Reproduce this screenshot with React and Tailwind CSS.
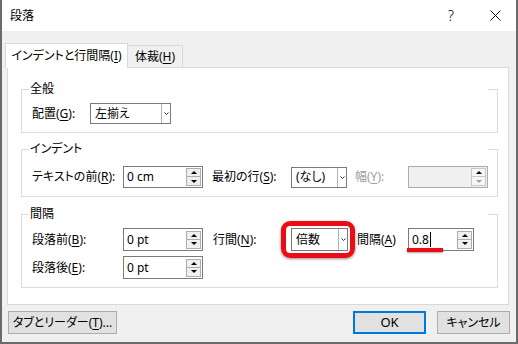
import React from 'react';

const font = "font-['Noto_Sans','Noto_Sans_CJK_JP',sans-serif] [font-feature-settings:'palt']";

function Mn({ pre, k, post, dim }) {
  return (
    <span className={`whitespace-nowrap ${dim ? 'text-[#a0a0a0]' : 'text-black'}`}>
      {pre}
      <span className="underline underline-offset-[2px]">{k}</span>
      {post}
    </span>
  );
}

function Up({ dim }) {
  return <div className={`h-0 w-0 border-x-[3px] border-b-[3px] border-x-transparent ${dim ? 'border-b-[#a0a0a0]' : 'border-b-black'}`} />;
}

function Down({ dim }) {
  return <div className={`h-0 w-0 border-x-[3px] border-t-[3px] border-x-transparent ${dim ? 'border-t-[#a0a0a0]' : 'border-t-black'}`} />;
}

function Spinner({ disabled }) {
  return (
    <div className="mr-[1px] flex w-[15px] flex-col">
      <div className={`flex h-[9px] items-center justify-center border ${disabled ? 'border-[#c8c8c8] bg-[#f7f7f7]' : 'border-[#adadad] bg-[#f0f0f0]'}`}>
        <Up />
      </div>
      <div className={`flex h-[9px] items-center justify-center border border-t-0 ${disabled ? 'border-[#c8c8c8] bg-[#f7f7f7]' : 'border-[#adadad] bg-[#f0f0f0]'}`}>
        <Down dim={disabled} />
      </div>
    </div>
  );
}

function SpinInput({ value, w = 'w-[80px]', h = 'h-[22px]', disabled, children }) {
  return (
    <div className={`relative flex ${w} ${h} items-center border ${disabled ? 'border-[#acacac] bg-[#f0f0f0]' : 'border-[#7a7a7a] bg-white'}`}>
      <span className="flex flex-1 items-center whitespace-pre pl-[3px] text-[12px] leading-[16px]">{value}</span>
      <Spinner disabled={disabled} />
      {children}
    </div>
  );
}

function Select({ value, w, h = 'h-[21px]', children }) {
  return (
    <div className={`relative flex ${w} ${h} border border-[#7a7a7a] bg-white`}>
      <span className="flex flex-1 items-center pl-[4px] text-[12px] leading-[16px]">{value}</span>
      <span className="flex w-[9px] items-center justify-center border-l border-[#b5b5b5]">
        <svg width="5" height="3" viewBox="0 0 5 3">
          <polyline points="0.5,0.5 2.5,2.5 4.5,0.5" fill="none" stroke="#333" strokeWidth="1" />
        </svg>
      </span>
      {children}
    </div>
  );
}

function Group({ title, className = '', bodyClass = '', children }) {
  return (
    <div className={`flex w-[477px] flex-col ${className}`}>
      <div className="flex h-[16px]">
        <div className="h-[8px] w-[8px] self-end border-l border-t border-[#dcdcdc]" />
        <span className="pl-[1px] text-[12px] leading-[16px]">{title}</span>
        <div className="flex-1" />
        <div className="h-[8px] w-[10px] self-end border-r border-t border-[#dcdcdc]" />
      </div>
      <div className={`border-x border-b border-[#dcdcdc] pl-[10px] ${bodyClass}`}>{children}</div>
    </div>
  );
}

export default function App() {
  return (
    <div className={`flex h-[344px] w-[518px] flex-col border-x-2 border-b-2 border-[#6b6b6b] bg-[#f0f0f0] text-black ${font}`}>
      {/* title bar */}
      <div className="flex h-[31px] items-center bg-white">
        <span className="pl-[8px] text-[12px]">段落</span>
        <div className="flex-1" />
        <span className="mr-[36px] text-[14px] font-light leading-none">?</span>
        <svg className="mr-[15px]" width="11" height="11" viewBox="0 0 11 11">
          <path d="M0.5 0.5 L10.5 10.5 M10.5 0.5 L0.5 10.5" stroke="#111" strokeWidth="1" />
        </svg>
      </div>

      <div className="flex flex-1 flex-col pl-[5px] pt-[12px]">
        {/* tabs */}
        <div className="flex items-end">
          <div className="relative z-10 -mb-px ml-[-2px] flex h-[25px] w-[123px] items-center justify-center border-x border-t border-[#d9d9d9] bg-white text-[12px]">
            <Mn pre="インデントと行間隔(" k="I" post=")" />
          </div>
          <div className="flex h-[22px] w-[55px] items-center justify-center border-r border-t border-[#d9d9d9] bg-[#f0f0f0] text-[12px]">
            <Mn pre="体裁(" k="H" post=")" />
          </div>
        </div>

        {/* panel */}
        <div className="flex w-[502px] flex-col border border-[#d9d9d9] bg-white pb-[16px] pl-[13px] pt-[13px]">
          <Group title="全般" bodyClass="pt-[6px] pb-[8px]">
            <div className="flex h-[21px] items-center text-[12px]">
              <span className="w-[58px]"><Mn pre="配置(" k="G" post="):" /></span>
              <Select value="左揃え" w="w-[81px]" />
            </div>
          </Group>

          <Group title="インデント" className="mt-[8px]" bodyClass="pt-[9px] pb-[8px]">
            <div className="flex h-[22px] items-center text-[12px]">
              <span className="w-[91px]"><Mn pre="テキストの前(" k="R" post="):" /></span>
              <SpinInput value="0 cm" />
              <span className="ml-[9px] w-[79px]"><Mn pre="最初の行(" k="S" post="):" /></span>
              <Select value="(なし)" w="w-[56px]" />
              <span className="ml-[8px] w-[53px]"><Mn pre="幅(" k="Y" post="):" dim /></span>
              <SpinInput value="" disabled />
            </div>
          </Group>

          <Group title="間隔" className="mt-[9px]" bodyClass="pt-[6px] pb-[8px]">
            <div className="flex flex-col gap-[5px] text-[12px]">
              <div className="flex h-[23px] items-center">
                <span className="w-[91px]"><Mn pre="段落前(" k="B" post="):" /></span>
                <SpinInput value="0 pt" h="h-[23px]" />
                <span className="ml-[10px] w-[78px]"><Mn pre="行間(" k="N" post="):" /></span>
                <Select value="倍数" w="w-[57px]" h="h-[23px]">
                  <div className="absolute -left-[11px] -right-[8px] -top-[8px] -bottom-[8px] rounded-[9px] border-[5px] border-[#ec0c16] shadow-[0_1px_3px_rgba(0,0,0,0.45)]" />
                </Select>
                <span className="ml-[9px] w-[51px]"><Mn pre="間隔(" k="A" post=")" /></span>
                <SpinInput value={<><span>0.8</span><span className="ml-[1px] inline-block h-[15px] w-px bg-black" /></>} w="w-[66px]" h="h-[23px]">
                  <div className="absolute -left-[2px] top-[19px] h-[4px] w-[36px] bg-[#ec0c16] shadow-[0_1px_2px_rgba(0,0,0,0.35)]" />
                </SpinInput>
              </div>
              <div className="flex h-[23px] items-center">
                <span className="w-[91px]"><Mn pre="段落後(" k="E" post="):" /></span>
                <SpinInput value="0 pt" h="h-[23px]" />
              </div>
            </div>
          </Group>
        </div>

        {/* buttons */}
        <div className="mt-[6px] flex w-[503px] items-center text-[12px]">
          <button className="ml-[1px] flex h-[23px] w-[109px] items-center justify-center border border-[#adadad] bg-[#e1e1e1]">
            <Mn pre="タブとリーダー(" k="T" post=")..." />
          </button>
          <div className="flex-1" />
          <button className="flex h-[23px] w-[73px] items-center justify-center border-2 border-[#0078d7] bg-[#e1e1e1] text-[13px]">OK</button>
          <button className="ml-[11px] flex h-[23px] w-[73px] items-center justify-center border border-[#adadad] bg-[#e1e1e1]">キャンセル</button>
        </div>
      </div>
    </div>
  );
}
